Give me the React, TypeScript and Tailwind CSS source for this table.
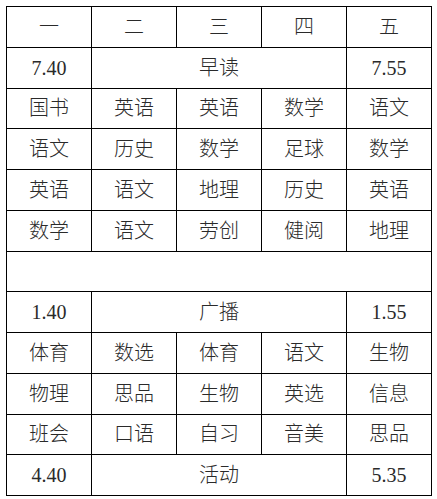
import React from "react";

type Cell = { t: string; span?: number };

const rows: Cell[][] = [
  [{ t: "一" }, { t: "二" }, { t: "三" }, { t: "四" }, { t: "五" }],
  [{ t: "7.40" }, { t: "早读", span: 3 }, { t: "7.55" }],
  [{ t: "国书" }, { t: "英语" }, { t: "英语" }, { t: "数学" }, { t: "语文" }],
  [{ t: "语文" }, { t: "历史" }, { t: "数学" }, { t: "足球" }, { t: "数学" }],
  [{ t: "英语" }, { t: "语文" }, { t: "地理" }, { t: "历史" }, { t: "英语" }],
  [{ t: "数学" }, { t: "语文" }, { t: "劳创" }, { t: "健阅" }, { t: "地理" }],
  [{ t: "", span: 5 }],
  [{ t: "1.40" }, { t: "广播", span: 3 }, { t: "1.55" }],
  [{ t: "体育" }, { t: "数选" }, { t: "体育" }, { t: "语文" }, { t: "生物" }],
  [{ t: "物理" }, { t: "思品" }, { t: "生物" }, { t: "英选" }, { t: "信息" }],
  [{ t: "班会" }, { t: "口语" }, { t: "自习" }, { t: "音美" }, { t: "思品" }],
  [{ t: "4.40" }, { t: "活动", span: 3 }, { t: "5.35" }],
];

export default function App() {
  return (
    <div className="w-[437px] h-[499px] bg-white pl-[6px] pt-[6px]">
      <div
        className="grid grid-cols-5 grid-rows-12 w-[426px] h-[490px] border-l border-t border-black text-[#2a2a2a] text-[20px] font-light"
        style={{ fontFamily: '"Liberation Serif", "Noto Sans CJK SC", serif' }}
      >
        {rows.map((r, i) =>
          r.map((c, j) => (
            <div
              key={`${i}-${j}`}
              className={`flex items-center justify-center border-r border-b border-black leading-none ${
                c.span === 5 ? "col-span-5" : c.span === 3 ? "col-span-3" : ""
              }`}
            >
              {c.t}
            </div>
          ))
        )}
      </div>
    </div>
  );
}
